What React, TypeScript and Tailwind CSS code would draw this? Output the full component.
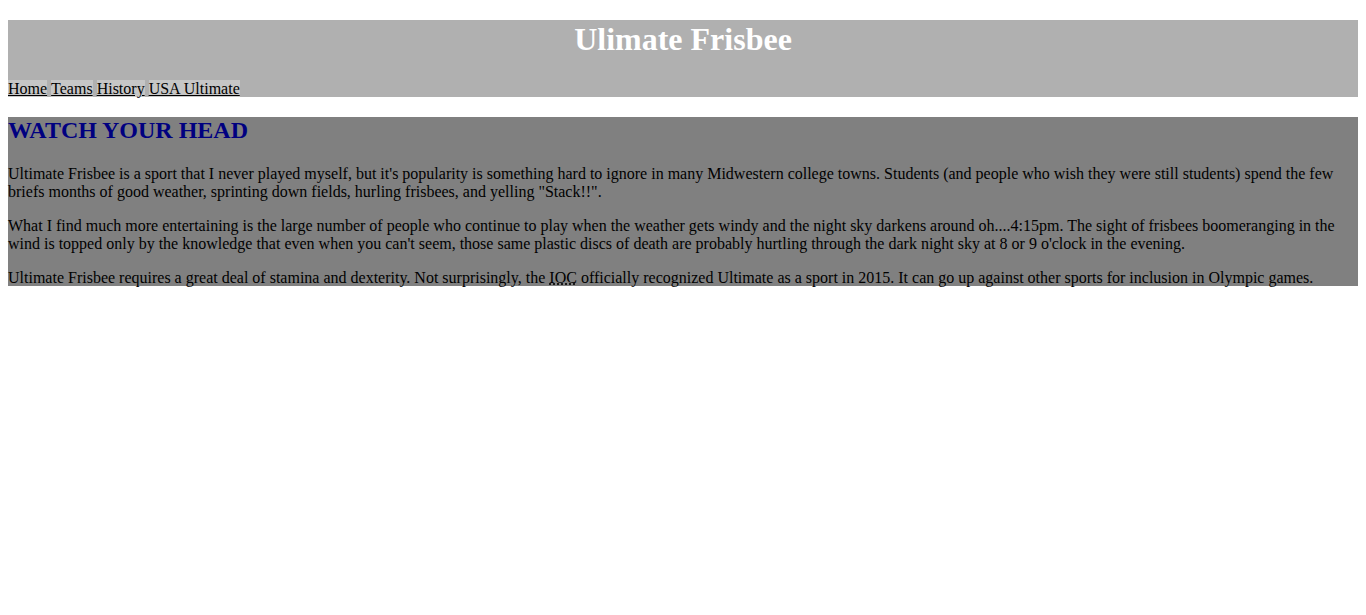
const serif = { fontFamily: '"Liberation Serif", "Times New Roman", serif' }

const links = ['Home', 'Teams', 'History', 'USA Ultimate']

export default function App() {
  return (
    <div
      className="min-h-[615px] bg-white px-2 pt-5 text-base leading-[18px] text-black"
      style={serif}
    >
      <header className="bg-[#b0b0b0]">
        <h1 className="mb-[22px] text-center text-[32px] leading-[38px] font-bold text-white">
          Ulimate Frisbee
        </h1>
        <nav className="flex gap-1 leading-[17px]">
          {links.map((l) => (
            <a key={l} href="#" className="bg-[#c6c6c6] text-black underline">
              {l}
            </a>
          ))}
        </nav>
      </header>

      <main className="mt-5 bg-[#808080]">
        <h2 className="mb-[22px] text-2xl leading-[26px] font-bold text-[#000080]">
          WATCH YOUR HEAD
        </h2>
        <p className="mb-4">
          Ultimate Frisbee is a sport that I never played myself, but it's popularity is
          something hard to ignore in many Midwestern college towns. Students (and people
          who wish they were still students) spend the few briefs months of good weather,
          sprinting down fields, hurling frisbees, and yelling "Stack!!".
        </p>
        <p className="mb-4">
          What I find much more entertaining is the large number of people who continue to
          play when the weather gets windy and the night sky darkens around oh....4:15pm.
          The sight of frisbees boomeranging in the wind is topped only by the knowledge
          that even when you can't seem, those same plastic discs of death are probably
          hurtling through the dark night sky at 8 or 9 o'clock in the evening.
        </p>
        <p className="leading-[17px]">
          Ultimate Frisbee requires a great deal of stamina and dexterity. Not surprisingly,
          the{' '}
          <abbr title="International Olympic Committee" className="underline decoration-dotted">
            IOC
          </abbr>{' '}
          officially recognized Ultimate as a sport in 2015. It can go up against other
          sports for inclusion in Olympic games.
        </p>
      </main>
    </div>
  )
}
